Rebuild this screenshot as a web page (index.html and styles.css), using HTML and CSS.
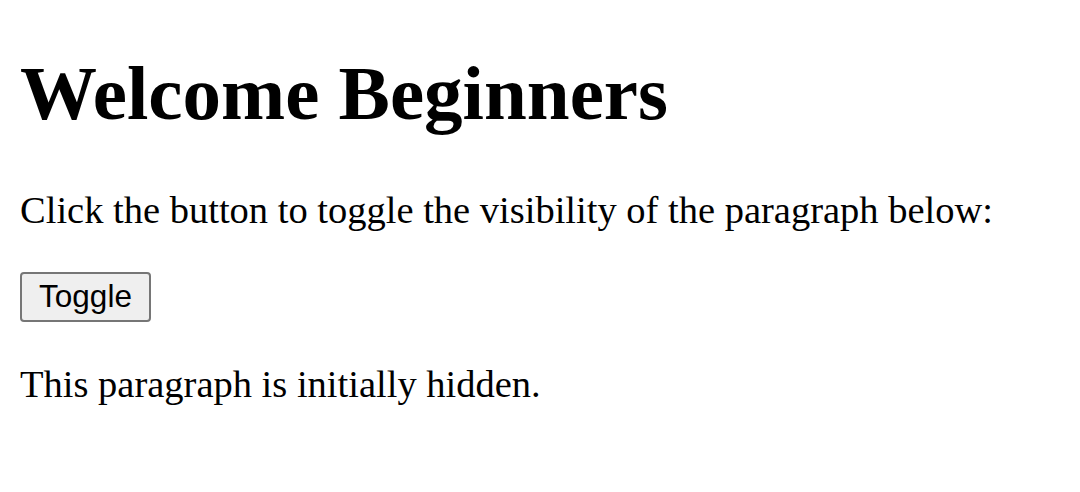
FILE: index.html
```html
<!DOCTYPE html>
<html>
<head>
<meta charset="utf-8">
<link rel="stylesheet" href="styles.css">
</head>
<body class="page">
<h1 class="title">Welcome Beginners</h1>
<p class="text">Click the button to toggle the visibility of the paragraph below:</p>
<button class="toggle">Toggle</button>
<p class="text">This paragraph is initially hidden.</p>
</body>
</html>
```
FILE: styles.css
```css
html { background: #fff; }
.page {
  margin: 20px;
  font-family: "Liberation Serif", "Times New Roman", serif;
  font-size: 38.5px;
  color: #000;
}
.title {
  font-size: 77px;
  font-weight: bold;
  margin: 29px 0 50px;
  line-height: 1.15;
}
.text {
  margin: 40px 0;
  line-height: 1.15;
}
.toggle {
  display: block;
  font-family: "Liberation Sans", Arial, sans-serif;
  font-size: 31.5px;
  height: 50px;
  width: 131px;
  padding: 0 12px;
  background: #efefef;
  border: 2px solid #767676;
  border-radius: 4px;
  color: #000;
}
```
